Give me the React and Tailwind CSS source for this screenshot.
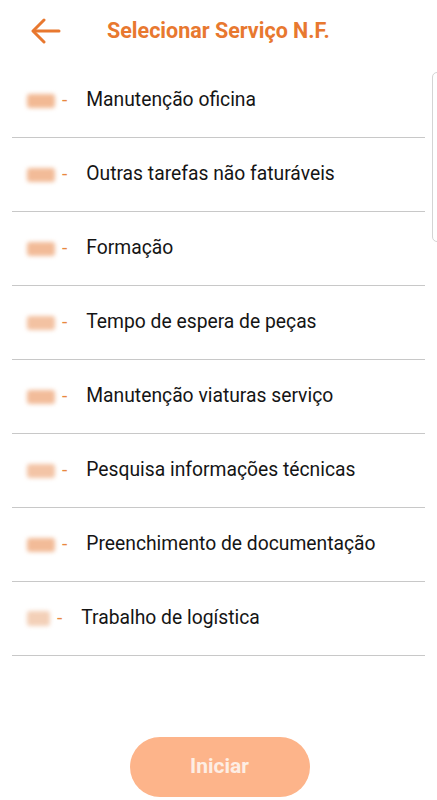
import React from "react";

const items = [
  { t: "Manutenção oficina", c: "bg-[#f2b994]" },
  { t: "Outras tarefas não faturáveis", c: "bg-[#f2bb98]" },
  { t: "Formação", c: "bg-[#f2bb98]" },
  { t: "Tempo de espera de peças", c: "bg-[#f3c2a2]" },
  { t: "Manutenção viaturas serviço", c: "bg-[#f2bc9a]" },
  { t: "Pesquisa informações técnicas", c: "bg-[#f3c4a6]" },
  { t: "Preenchimento de documentação", c: "bg-[#f2bb98]" },
];

export default function App() {
  return (
    <div
      className="relative flex h-[800px] w-[437px] flex-col overflow-hidden bg-white"
      style={{ fontFamily: "Roboto, 'Noto Sans', sans-serif" }}
    >
      <div className="flex h-[64px] items-center pb-[2px]">
        <svg
          className="ml-[31px]"
          width="30"
          height="26"
          viewBox="0 0 30 26"
          fill="none"
          stroke="#e8782f"
          strokeWidth="3"
          strokeLinecap="round"
          strokeLinejoin="round"
        >
          <path d="M28 13H3" />
          <path d="M13 2L2 13L13 24" />
        </svg>
        <div className="ml-[46px] text-[21.5px] font-bold text-[#e8782f]">
          Selecionar Serviço N.F.
        </div>
      </div>

      <div className="mx-[12px] flex flex-col">
        {items.map((it) => (
          <div
            key={it.t}
            className="flex h-[74px] items-center border-b border-[#c8c8c8]"
          >
            <div className={`ml-[15px] h-[14px] w-[28px] rounded-[3px] blur-[2px] ${it.c}`} />
            <span className="ml-[7px] text-[19px] text-[#e8873f]">-</span>
            <span className="ml-[19px] text-[19.3px] text-[#151515]">{it.t}</span>
          </div>
        ))}
        <div className="flex h-[74px] items-center border-b border-[#c8c8c8]">
          <div className="ml-[15px] h-[15px] w-[23px] rounded-[3px] bg-[#f3d0b8] blur-[2px]" />
          <span className="ml-[7px] text-[19px] text-[#e8873f]">-</span>
          <span className="ml-[19px] text-[19.3px] text-[#151515]">Trabalho de logística</span>
        </div>
      </div>

      <div className="absolute right-[-6px] top-[72px] h-[170px] w-[11px] rounded-[5px] border border-[#d4d4d4]" />

      <div className="mt-auto mb-[3px] flex justify-center">
        <button className="ml-[2px] flex h-[60px] w-[180px] items-center justify-center rounded-full bg-[#fdb48a] text-[21px] font-bold text-[#fdeee4]">
          Iniciar
        </button>
      </div>
    </div>
  );
}
